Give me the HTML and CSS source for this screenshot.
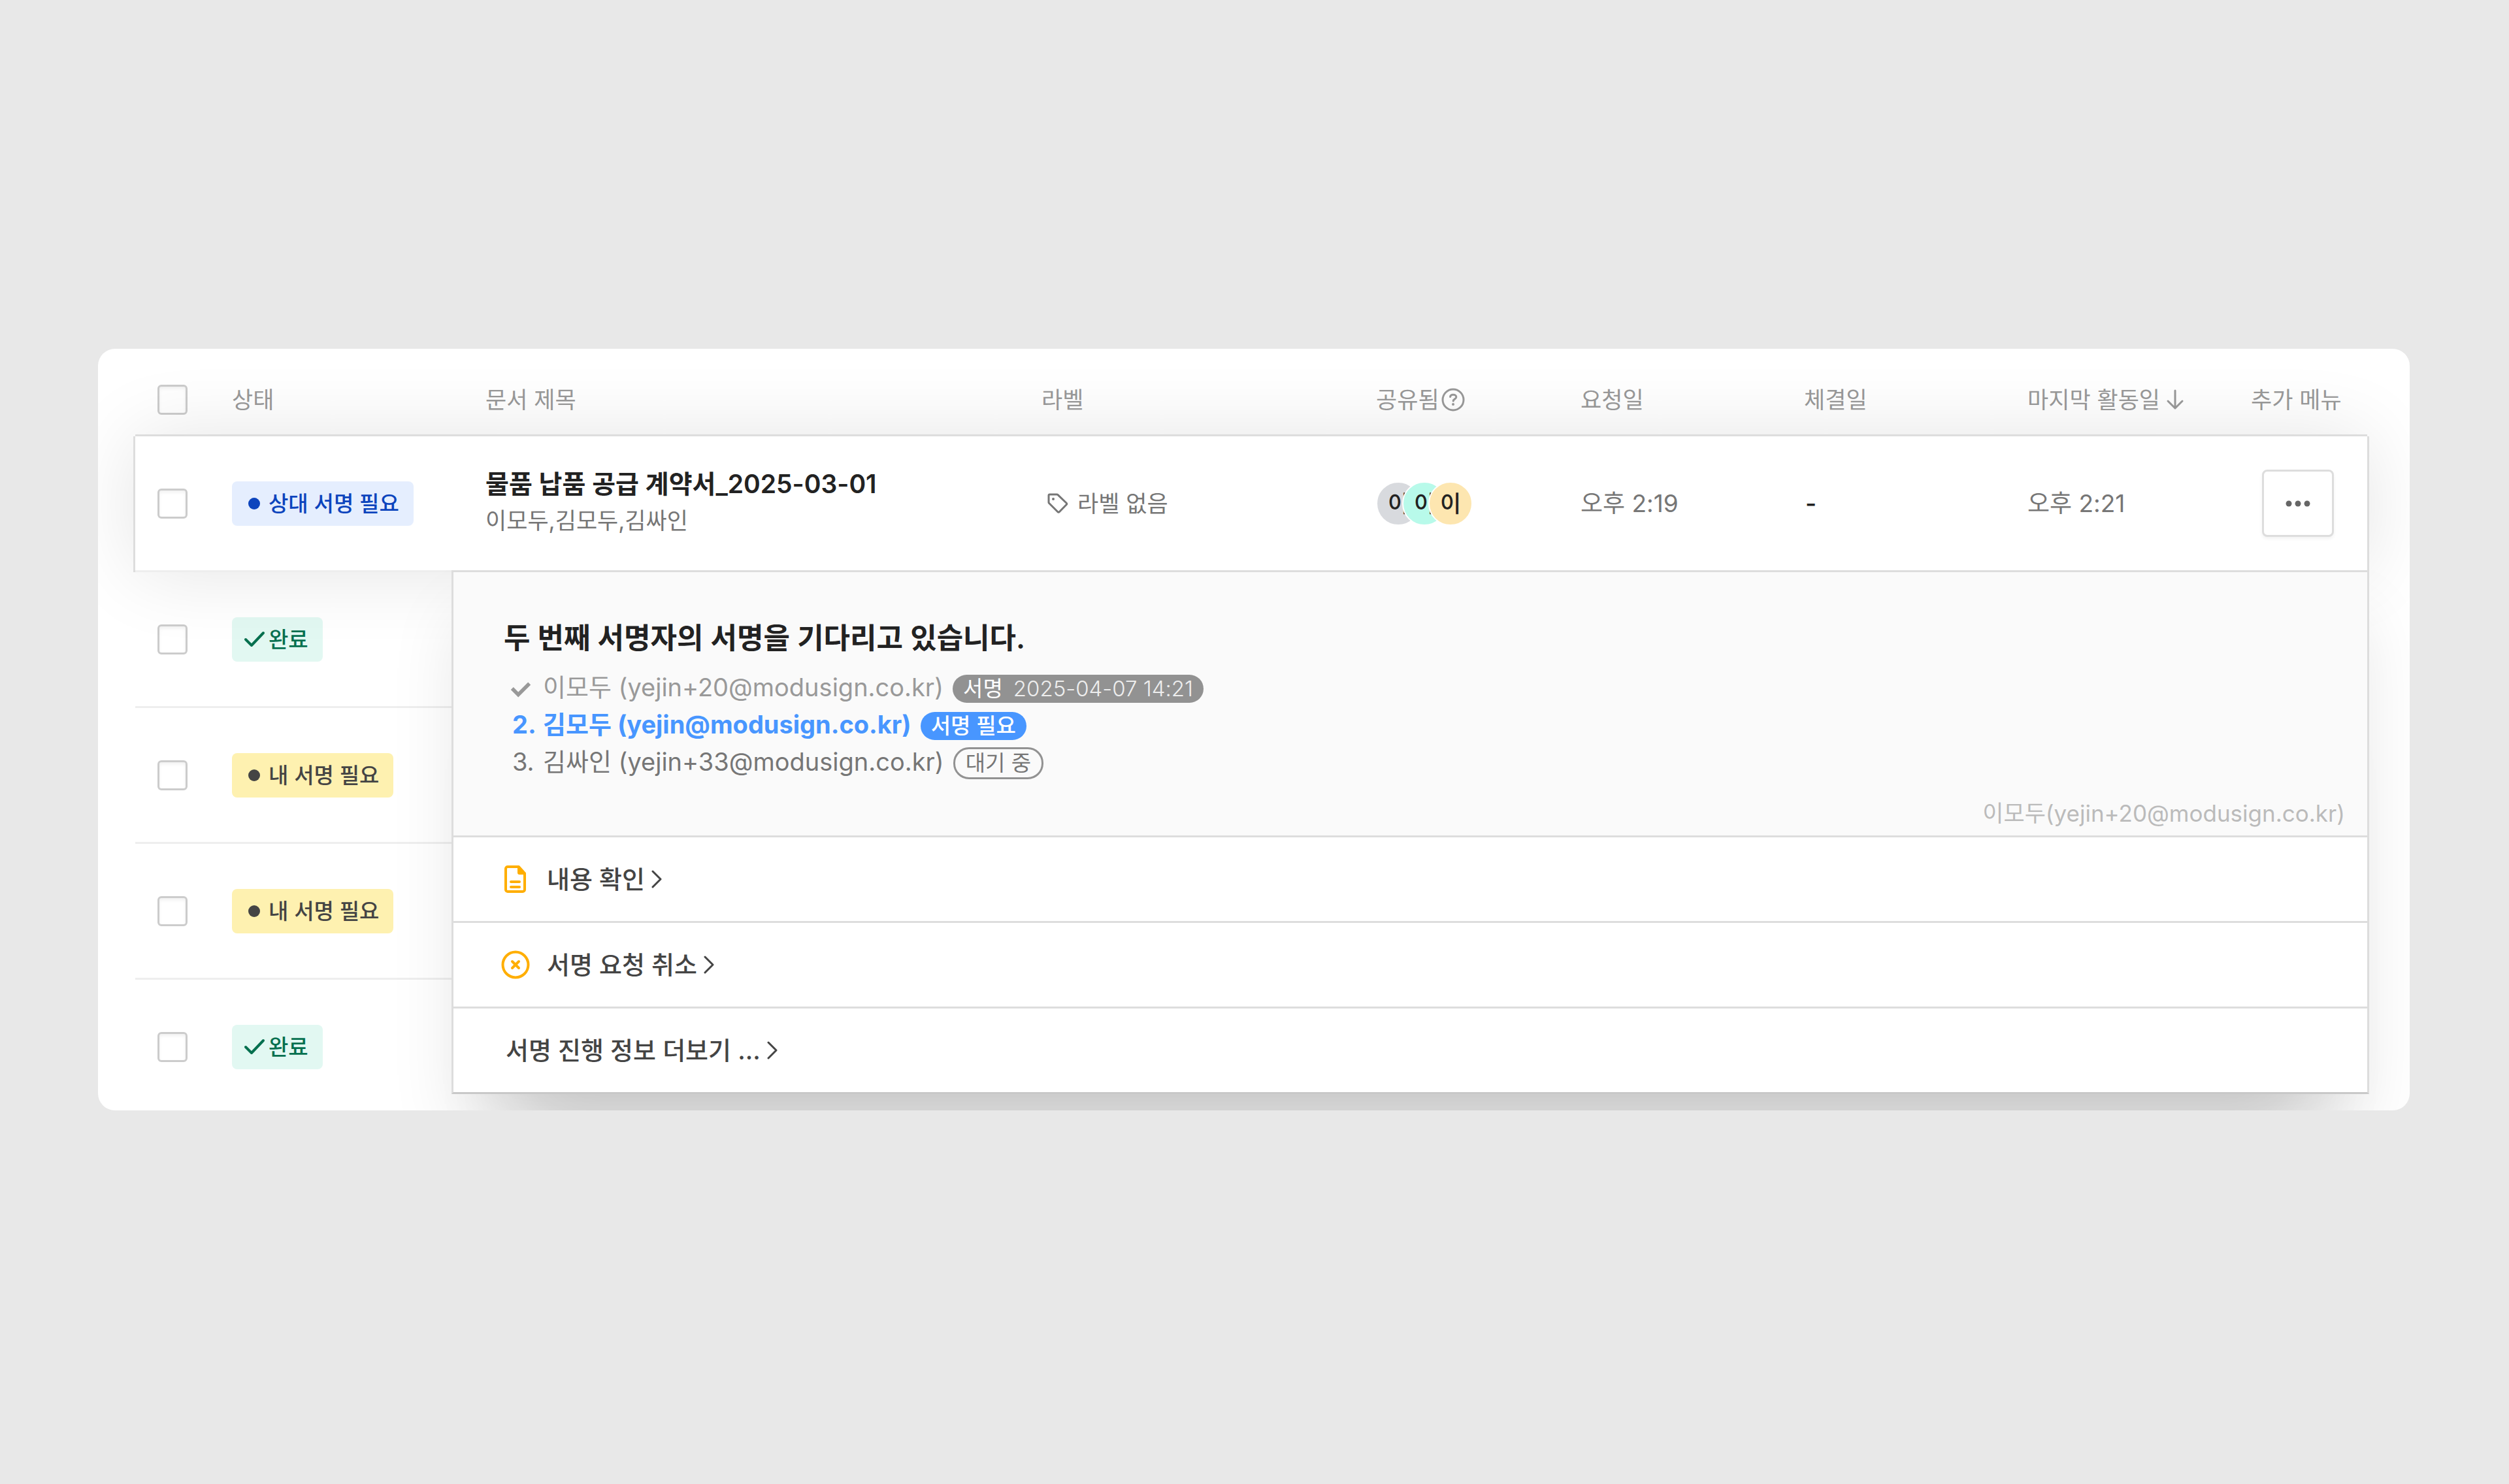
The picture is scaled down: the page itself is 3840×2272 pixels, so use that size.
FILE: index.html
```html
<!DOCTYPE html>
<html lang="ko">
<head>
  <meta charset="UTF-8">
  <title>문서 목록</title>
  <link rel="stylesheet" href="styles.css">
</head>
<body>

  <main class="card">
    <div class="table-wrap">
      <table class="docs">
        <colgroup>
          <col class="col-check">
          <col class="col-status">
          <col>
          <col class="col-label">
          <col class="col-shared">
          <col class="col-date">
          <col class="col-date">
          <col class="col-date">
          <col class="col-menu">
        </colgroup>
        <thead>
          <tr>
            <th class="check"><input type="checkbox" aria-label="전체 선택"></th>
            <th>상태</th>
            <th>문서 제목</th>
            <th>라벨</th>
            <th>
              <span class="with-icon">공유됨<svg class="help" viewBox="0 0 36 36"><circle cx="18" cy="18" r="16"/><path d="M13.500 13.500c.3-2 2-3.300 4.500-3.300 2.800 0 4.800 1.500 4.800 3.800 0 3-4.600 2.800-4.600 6"/><circle class="fill" cx="18" cy="25" r="2"/></svg></span>
            </th>
            <th>요청일</th>
            <th>체결일</th>
            <th>
              <span class="with-icon">마지막 활동일<svg class="arrow" viewBox="0 0 36 36"><path d="M18 4v27M7 20l11 11 11-11"/></svg></span>
            </th>
            <th>추가 메뉴</th>
          </tr>
        </thead>
        <tbody>
          <tr class="active">
            <td class="check"><input type="checkbox" aria-label="물품 납품 공급 계약서 선택"></td>
            <td><span class="badge blue"><i class="dot"></i>상대 서명 필요</span></td>
            <td>
              <div class="doc-title">물품 납품 공급 계약서_2025-03-01</div>
              <div class="doc-people">이모두,김모두,김싸인</div>
            </td>
            <td>
              <span class="no-label"><svg class="tag" viewBox="0 0 36 36"><path d="M4 5.500C4 4.700 4.700 4 5.500 4h11c.6 0 1.200.2 1.600.7L31 17c.8.8.8 2 0 2.800L20.500 30.500c-.8.8-2 .8-2.800 0L4.700 17.500c-.4-.4-.7-1-.7-1.600z"/><circle class="fill" cx="11" cy="11" r="2"/></svg>라벨 없음</span>
            </td>
            <td>
              <div class="avatars">
                <span class="avatar gray">이</span>
                <span class="avatar mint">이</span>
                <span class="avatar yellow">이</span>
              </div>
            </td>
            <td class="date">오후 2:19</td>
            <td class="date none">-</td>
            <td class="date">오후 2:21</td>
            <td>
              <button class="more" aria-label="추가 메뉴"><svg viewBox="0 0 40 12"><circle cx="6" cy="6" r="4.500"/><circle cx="20" cy="6" r="4.500"/><circle cx="34" cy="6" r="4.500"/></svg></button>
            </td>
          </tr>
          <tr>
            <td class="check"><input type="checkbox" aria-label="문서 선택"></td>
            <td><span class="badge green"><svg viewBox="0 0 36 36"><path d="M5 18l9 9L32 8"/></svg>완료</span></td>
            <td colspan="7"></td>
          </tr>
          <tr>
            <td class="check"><input type="checkbox" aria-label="문서 선택"></td>
            <td><span class="badge amber"><i class="dot"></i>내 서명 필요</span></td>
            <td colspan="7"></td>
          </tr>
          <tr>
            <td class="check"><input type="checkbox" aria-label="문서 선택"></td>
            <td><span class="badge amber"><i class="dot"></i>내 서명 필요</span></td>
            <td colspan="7"></td>
          </tr>
          <tr>
            <td class="check"><input type="checkbox" aria-label="문서 선택"></td>
            <td><span class="badge green"><svg viewBox="0 0 36 36"><path d="M5 18l9 9L32 8"/></svg>완료</span></td>
            <td colspan="7"></td>
          </tr>
        </tbody>
      </table>

      <!-- 서명 진행 정보 팝오버 -->
      <section class="popover">
        <div class="progress">
          <h2>두 번째 서명자의 서명을 기다리고 있습니다.</h2>
          <ol class="signers">
            <li class="done">
              <span class="num"><svg viewBox="0 0 36 36"><path d="M4 19l10 10L32 11"/></svg></span>
              <span>이모두 (yejin+20@modusign.co.kr)</span>
              <span class="pill">서명<span class="time">2025-04-07 14:21</span></span>
            </li>
            <li class="current">
              <span class="num">2.</span>
              <span>김모두 (yejin@modusign.co.kr)</span>
              <span class="pill">서명 필요</span>
            </li>
            <li>
              <span class="num">3.</span>
              <span>김싸인 (yejin+33@modusign.co.kr)</span>
              <span class="pill outline">대기 중</span>
            </li>
          </ol>
          <p class="requester">이모두(yejin+20@modusign.co.kr)</p>
        </div>
        <button class="action">
          <svg class="icon" viewBox="0 0 44 44"><path d="M10 3h17l9 10v25a3 3 0 0 1-3 3H10a3 3 0 0 1-3-3V6a3 3 0 0 1 3-3z"/><path class="fill" d="M25 2v10a3 3 0 0 0 3 3h9.500z"/><path d="M15 26h13M15 34h13"/></svg>
          내용 확인
          <svg class="chevron" viewBox="0 0 16 30"><path d="M2 3l12 12L2 27"/></svg>
        </button>
        <button class="action">
          <svg class="icon" viewBox="0 0 44 44"><circle cx="22" cy="22" r="19.500"/><path d="M17 17l10 10M27 17L17 27"/></svg>
          서명 요청 취소
          <svg class="chevron" viewBox="0 0 16 30"><path d="M2 3l12 12L2 27"/></svg>
        </button>
        <button class="action plain">
          서명 진행 정보 더보기 ...
          <svg class="chevron" viewBox="0 0 16 30"><path d="M2 3l12 12L2 27"/></svg>
        </button>
      </section>
    </div>
  </main>

</body>
</html>
```
FILE: styles.css
```css
* {
  box-sizing: border-box;
}
body {
  margin: 0;
  padding: 534px 152px 0 150px;
  background: #e8e8e8;
  font-family: Inter, "Noto Sans CJK KR", sans-serif;
  font-size: 35px;
  line-height: 56px;
  color: #767676;
}
svg {
  fill: none;
  stroke: currentColor;
  stroke-width: 3;
  stroke-linecap: round;
  stroke-linejoin: round;
  flex: none;
}
svg .fill {
  fill: currentColor;
  stroke: none;
}
button {
  font: inherit;
  cursor: pointer;
}

.card {
  background: #fff;
  border-radius: 26px;
  padding: 22px 65px 0 57px;
  overflow: hidden;
}
.table-wrap {
  position: relative;
  margin-bottom: -8px;
}

/* 문서 목록 */
.docs {
  width: 100%;
  table-layout: fixed;
  border-collapse: separate;
  border-spacing: 0;
}
.col-check { width: 148px; }
.col-status { width: 388px; }
.col-label { width: 512px; }
.col-shared { width: 313px; }
.col-date { width: 342px; }
.col-menu { width: 178px; }

.docs th {
  height: 112px;
  padding: 0;
  text-align: left;
  font-weight: 400;
  color: #999;
  white-space: nowrap;
}
.docs td {
  height: 208px;
  padding: 0;
  border-bottom: 3px solid #eee;
  white-space: nowrap;
}
.docs .check {
  padding-left: 34px;
}
.docs .date {
  font-size: 37px;
}
.docs .none {
  padding-left: 2px;
  font-weight: 500;
  color: #222;
}
.docs input {
  display: block;
  appearance: none;
  width: 46px;
  height: 46px;
  margin: 0;
  border: 3px solid #ccc;
  border-radius: 6px;
  background: #fff;
  box-shadow: inset 0 3px 5px rgba(0, 0, 0, 0.06);
}
.active {
  position: relative;
  box-shadow: -3px 0 #ddd, 3px 0 #ddd, 0 -3px #ddd, 0 0 120px rgba(0, 0, 0, 0.11);
}
.active td {
  background: #fff;
}

.with-icon,
.no-label,
.avatars {
  display: flex;
  align-items: center;
}
.help {
  width: 36px;
  height: 36px;
  margin-left: 3px;
}
.arrow {
  width: 36px;
  height: 36px;
  margin-left: 5px;
}
.tag {
  width: 36px;
  height: 36px;
  margin: 0 12px 0 7px;
}

.badge {
  display: inline-flex;
  align-items: center;
  gap: 4px;
  height: 68px;
  padding: 0 22px 0 16px;
  border-radius: 8px;
  font-size: 33px;
  font-weight: 500;
  vertical-align: middle;
}
.badge svg {
  width: 36px;
  height: 36px;
  stroke-width: 4;
}
.dot {
  width: 18px;
  height: 18px;
  margin: 0 9px;
  border-radius: 50%;
  background: currentColor;
}
.blue {
  background: #e5eefe;
  color: #0c44bd;
}
.green {
  background: #e2f8f2;
  color: #05704f;
}
.amber {
  background: #fef1b0;
  color: #444;
}

.doc-title {
  font-size: 39px;
  font-weight: 600;
  color: #222;
}
.doc-people {
  padding-bottom: 4px;
}

.avatar {
  width: 68px;
  height: 68px;
  margin-right: -28px;
  border: 2px solid #fff;
  border-radius: 50%;
  line-height: 64px;
  text-align: center;
  font-weight: 500;
  color: #222;
}
.avatar.gray { background: #d8dade; }
.avatar.mint { background: #b8faea; }
.avatar.yellow { background: #fde6b0; }

.more {
  display: flex;
  align-items: center;
  justify-content: center;
  width: 110px;
  height: 103px;
  margin-left: 17px;
  padding: 0;
  border: 3px solid #ddd;
  border-radius: 8px;
  background: #fff;
  color: #666;
  box-shadow: 0 3px 5px rgba(0, 0, 0, 0.05);
}
.more svg {
  width: 40px;
  height: 12px;
  fill: currentColor;
  stroke: none;
}

/* 팝오버 */
.popover {
  position: absolute;
  top: 317px;
  left: 484px;
  right: -3px;
  border: 3px solid #ddd;
  border-bottom-color: #c8c8c8;
  background: #fff;
  box-shadow: 0 60px 100px -10px rgba(0, 0, 0, 0.1), 0 160px 110px -95px rgba(0, 0, 0, 0.14);
  clip-path: inset(0 -200px -200px -200px);
}
.progress {
  padding: 71px 34px 6px 77px;
  background: #fafafa;
  border-bottom: 3px solid #ddd;
}
.progress h2 {
  margin: 0 0 17px;
  font-size: 44px;
  line-height: 60px;
  font-weight: 600;
  color: #222;
}
.signers {
  margin: 0 0 22px;
  padding: 0;
  list-style: none;
  font-size: 38px;
  line-height: 57px;
}
.signers li {
  display: flex;
  align-items: center;
}
.signers .num {
  width: 47px;
  margin-left: 13px;
}
.num svg {
  display: block;
  width: 34px;
  height: 34px;
  margin-left: -4px;
  stroke-width: 6;
  stroke-linecap: butt;
  stroke-linejoin: miter;
}
.done {
  color: #999;
}
.current {
  color: #4896ff;
  font-weight: 700;
}
.pill {
  margin: 4px 0 0 14px;
  padding: 0 16px;
  border-radius: 24px;
  background: #4896ff;
  color: #fff;
  font-size: 33px;
  line-height: 43px;
  font-weight: 500;
}
.done .pill {
  background: #929292;
  font-weight: 400;
}
.time {
  margin-left: 16px;
  font-weight: 300;
  color: #eee;
}
.outline {
  border: 3px solid #929292;
  background: none;
  color: #767676;
  font-weight: 400;
}
.requester {
  margin: 0;
  text-align: right;
  color: #bbb;
}

.action {
  display: flex;
  align-items: center;
  gap: 10px;
  width: 100%;
  height: 131px;
  padding: 0 73px;
  border: 0;
  border-bottom: 3px solid #ddd;
  background: #fff;
  font-size: 38px;
  font-weight: 500;
  color: #444;
}
.action:last-child {
  height: 128px;
  border-bottom: 0;
}
.action.plain {
  padding-left: 80px;
}
.icon {
  width: 44px;
  height: 44px;
  margin-right: 16px;
  color: #ffae00;
  stroke-width: 4;
}
.chevron {
  width: 16px;
  height: 30px;
}
```
